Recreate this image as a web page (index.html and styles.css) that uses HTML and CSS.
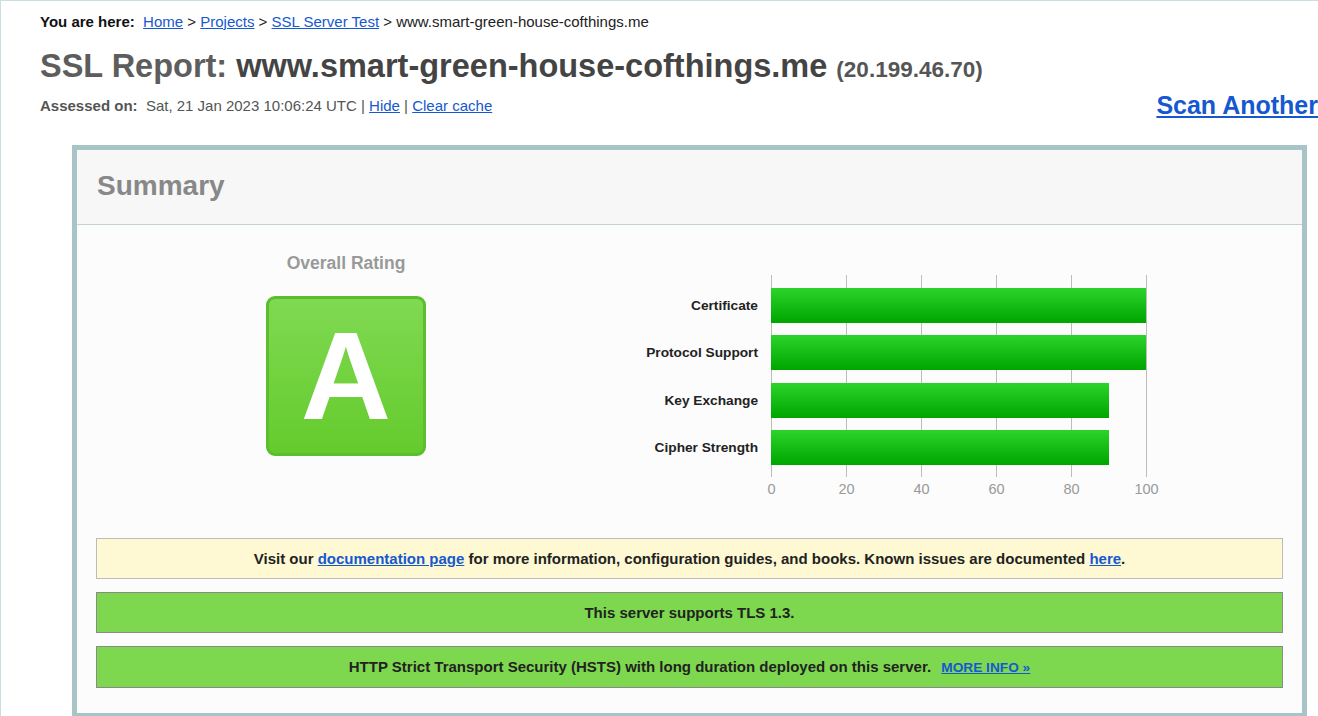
FILE: index.html
```html
<!DOCTYPE html>
<html lang="en">
<head>
<meta charset="utf-8">
<title>SSL Server Test: www.smart-green-house-cofthings.me</title>
<link rel="stylesheet" href="styles.css">
</head>
<body>
<div class="page">
  <div class="breadcrumb"><b>You are here:</b>&nbsp; <a href="#">Home</a> &gt; <a href="#">Projects</a> &gt; <a href="#">SSL Server Test</a> &gt; www.smart-green-house-cofthings.me</div>
  <h1 class="report-title">SSL Report: <span class="host">www.smart-green-house-cofthings.me</span> <span class="ip">(20.199.46.70)</span></h1>
  <div class="assessed-row">
    <div class="assessed"><b>Assessed on:</b>&nbsp; Sat, 21 Jan 2023 10:06:24 UTC | <a href="#">Hide</a> | <a href="#">Clear cache</a></div>
    <a class="scan-another" href="#">Scan Another</a>
  </div>

  <div class="summary">
    <div class="summary-head">Summary</div>
    <div class="summary-body">
      <div class="top">
        <div class="rating">
          <div class="rating-title">Overall Rating</div>
          <div class="grade">A</div>
        </div>
        <div class="chart">
          <div class="labels">
            <div class="lbl">Certificate</div>
            <div class="lbl">Protocol Support</div>
            <div class="lbl">Key Exchange</div>
            <div class="lbl">Cipher Strength</div>
          </div>
          <div class="plot">
            <div class="bar" style="width:100%"></div>
            <div class="bar" style="width:100%"></div>
            <div class="bar" style="width:90%"></div>
            <div class="bar" style="width:90%"></div>
          </div>
          <div></div>
          <div class="axis"><span>0</span><span>20</span><span>40</span><span>60</span><span>80</span><span>100</span></div>
        </div>
      </div>
      <div class="messages">
        <div class="msg info">Visit our <a href="#">documentation page</a> for more information, configuration guides, and books. Known issues are documented <a href="#">here</a>.</div>
        <div class="msg good">This server supports TLS 1.3.</div>
        <div class="msg good">HTTP Strict Transport Security (HSTS) with long duration deployed on this server. <a class="more" href="#">MORE INFO »</a></div>
      </div>
    </div>
  </div>
</div>
</body>
</html>
```

FILE: styles.css
```css
html, body {
  margin: 0;
  padding: 0;
  background: #ffffff;
}
body {
  font-family: "Liberation Sans", Arial, sans-serif;
  color: #222;
  overflow: hidden;
}
a {
  color: #1558cf;
  text-decoration: underline;
}
.page {
  border-top: 1px solid #c9dde2;
  border-left: 1px solid #c9dde2;
  padding: 12px 0 0 39px;
  min-height: 800px;
}
.breadcrumb {
  font-size: 15px;
  line-height: 17px;
  color: #222;
}
.breadcrumb b {
  color: #111;
}
.report-title {
  margin: 18px 0 0 0;
  font-size: 32.5px;
  line-height: 36px;
  font-weight: bold;
  color: #5d5d5d;
}
.report-title .host {
  color: #444;
}
.report-title .ip {
  font-size: 22.5px;
  color: #555;
}
.assessed-row {
  display: flex;
  justify-content: space-between;
  align-items: center;
  margin-top: 2px;
  height: 30px;
}
.assessed {
  font-size: 15px;
  line-height: 17px;
  color: #555;
}
.scan-another {
  font-size: 25px;
  line-height: 30px;
  font-weight: bold;
  color: #1558cf;
}
.summary {
  margin: 25px 0 0 32px;
  width: 1235px;
  box-sizing: border-box;
  border: 5px solid #a7c4c7;
}
.summary-head {
  background: #f7f7f7;
  border-bottom: 1px solid #c4d2d6;
  padding: 20px 20px 22px 20px;
  font-size: 28px;
  line-height: 32px;
  font-weight: bold;
  color: #888;
}
.summary-body {
  background: #fcfcfc;
  padding: 0 19px 25px 19px;
}
.top {
  display: flex;
  height: 274px;
}
.rating {
  flex: 0 0 538px;
  margin-left: -19px;
  margin-right: 2px;
  display: flex;
  flex-direction: column;
  align-items: center;
  padding-top: 28px;
}
.rating-title {
  font-size: 17.5px;
  line-height: 20px;
  font-weight: bold;
  color: #999;
}
.grade {
  margin-top: 23px;
  width: 160px;
  height: 160px;
  box-sizing: border-box;
  border: 3px solid #5cbd2e;
  border-radius: 9px;
  background: linear-gradient(#80d952, #64cb2c);
  color: #fff;
  font-size: 125px;
  line-height: 154px;
  font-weight: bold;
  text-align: center;
}
.chart {
  display: grid;
  grid-template-columns: 154px 376px;
  grid-template-rows: 202px auto;
  padding-top: 50px;
}
.labels {
  display: flex;
  flex-direction: column;
  gap: 12.4px;
  padding-top: 13px;
  padding-right: 13px;
  text-align: right;
}
.lbl {
  height: 35px;
  line-height: 35px;
  font-size: 13.7px;
  font-weight: bold;
  color: #222;
  white-space: nowrap;
}
.plot {
  box-sizing: border-box;
  width: 376px;
  padding-right: 1px;
  padding-top: 13px;
  display: flex;
  flex-direction: column;
  gap: 12.4px;
  background-image: linear-gradient(to right, #bcbcbc 1px, transparent 1px);
  background-size: 75px 100%;
}
.bar {
  height: 35px;
  background: linear-gradient(#2bd42b, #00a500);
}
.axis {
  display: flex;
  justify-content: space-between;
  width: 376px;
  padding-top: 3px;
  font-size: 14.5px;
  line-height: 18px;
  color: #999;
}
.axis span {
  width: 1px;
  display: flex;
  justify-content: center;
  white-space: nowrap;
}
.messages {
  margin-top: 39px;
  display: flex;
  flex-direction: column;
  gap: 13px;
}
.msg {
  padding: 11px 10px;
  font-size: 15px;
  line-height: 17px;
  font-weight: bold;
  text-align: center;
  color: #222;
}
.msg.info {
  background: #fef9d3;
  border: 1px solid #bcbcbc;
}
.msg.good {
  background: #7dd84f;
  border: 1px solid #8a8a8a;
}
.msg .more {
  margin-left: 6px;
  font-size: 13.7px;
  text-transform: uppercase;
}
```
